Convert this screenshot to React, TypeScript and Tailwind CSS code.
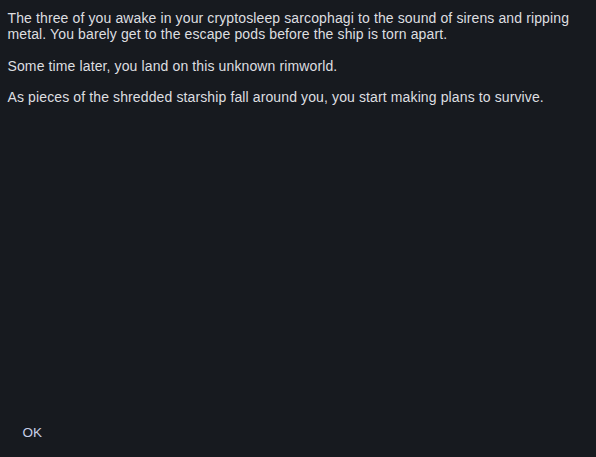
import React from "react";

const paragraphs = [
  "The three of you awake in your cryptosleep sarcophagi to the sound of sirens and ripping metal. You barely get to the escape pods before the ship is torn apart.",
  "Some time later, you land on this unknown rimworld.",
  "As pieces of the shredded starship fall around you, you start making plans to survive.",
];

const App: React.FC = () => {
  return (
    <div className="flex h-[457px] w-[596px] flex-col bg-[#171a1f] font-['Liberation_Sans',Arial,sans-serif] text-[14px] leading-[16px]">
      <div className="flex flex-1 flex-col gap-[15.6px] pl-[7.5px] pr-[7px] pt-[10.3px] tracking-[0.12px] text-[#dedfe0]">
        {paragraphs.map((p) => (
          <p key={p}>{p}</p>
        ))}
      </div>
      <div className="pb-[16.3px] pl-[22.5px]">
        <button type="button" className="text-[13.5px] text-[#c7cfe8]">
          OK
        </button>
      </div>
    </div>
  );
};

export default App;
